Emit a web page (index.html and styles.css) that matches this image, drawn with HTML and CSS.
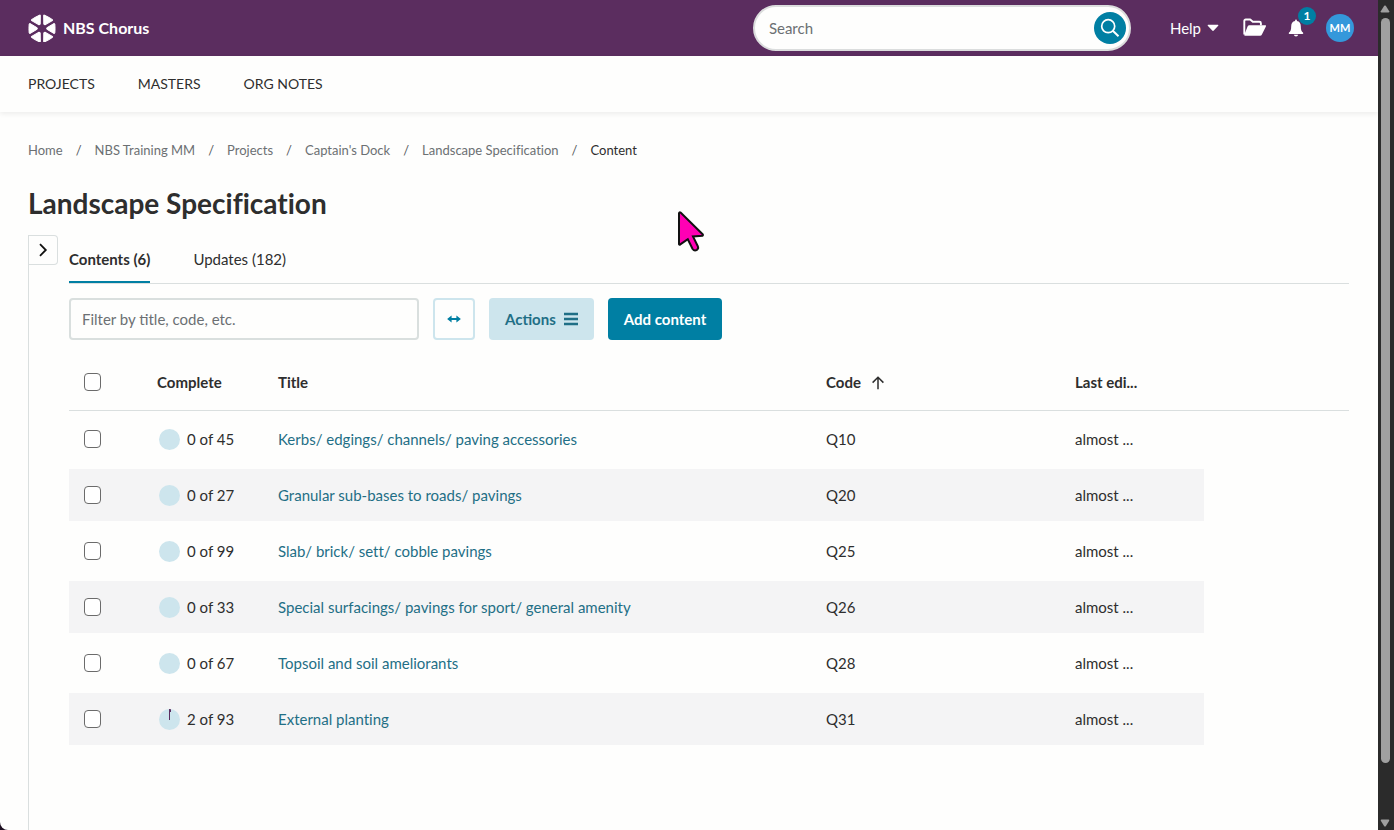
FILE: index.html
```html
<!DOCTYPE html>
<html lang="en">
<head>
    <meta charset="UTF-8">
    <meta name="viewport" content="width=device-width, initial-scale=1.0">
    <title>Landscape Specification - NBS Chorus</title>
    <link rel="stylesheet" href="styles.css">
</head>
<body>
    <div class="app">
        <header class="topbar">
            <a href="#" class="brand">
                <svg class="logo" viewBox="-14 -14.5 28 28" width="28" height="28">
                    <defs>
                        <path id="petal" d="M4.8 -.7 L12 -5 Q12.6 -5.2 12.8 -4.6 Q13.3 0 12.8 4.6 Q12.6 5.2 12 5 L4.8 .7 Z"/>
                    </defs>
                    <g fill="#fff" stroke="#fff" stroke-width="1" stroke-linejoin="round">
                        <use href="#petal"/>
                        <use href="#petal" transform="rotate(60)"/>
                        <use href="#petal" transform="rotate(120)"/>
                        <use href="#petal" transform="rotate(180)"/>
                        <use href="#petal" transform="rotate(240)"/>
                        <use href="#petal" transform="rotate(300)"/>
                    </g>
                </svg>
                <span>NBS Chorus</span>
            </a>
            <form class="search">
                <input type="text" placeholder="Search" aria-label="Search">
                <button type="button" class="search-btn" aria-label="Search">
                    <svg viewBox="0 0 20 20" width="20" height="20" fill="none" stroke="#fff" stroke-width="1.7">
                        <circle cx="8.2" cy="8.2" r="6.5"/>
                        <path d="M12.8 12.8 L18.5 18.2" stroke-width="2"/>
                    </svg>
                </button>
            </form>
            <div class="tools">
                <button type="button" class="help">Help
                    <svg viewBox="0 0 12 8" width="12" height="8"><path d="M1.2 .8h9.6q1 0 .4 .9L6.8 6.6q-.8 .8-1.6 0L.8 1.7Q.2.8 1.2.8z" fill="#fff"/></svg>
                </button>
                <button type="button" class="icon-btn folder" aria-label="Open project">
                    <svg viewBox="0 0 24 20" width="24" height="20">
                        <path d="M1.3 16.5V3Q1.3 1.5 2.8 1.5H7.2L9.8 3.8H16.4Q17.9 3.8 17.9 5.3V7.2" fill="none" stroke="#fff" stroke-width="1.9" stroke-linejoin="round"/>
                        <path d="M6.3 7.2H22.2Q23.6 7.2 22.9 8.5L18.9 16.6Q18.4 17.8 17 17.8H2.2Q.8 17.8 1.4 16.5L4.7 8.3Q5.2 7.2 6.3 7.2z" fill="#fff"/>
                    </svg>
                </button>
                <button type="button" class="icon-btn bell" aria-label="Notifications">
                    <svg viewBox="0 0 16 18" width="16" height="18" fill="#fff">
                        <path d="M7.1 1.4Q7.1.4 8 .4T8.9 1.4V2Q12.8 2.7 12.8 7.2C12.8 11 13.6 12.4 15 13.5Q15.8 14.9 14.6 15H1.4Q.2 14.9 1 13.5C2.4 12.4 3.2 11 3.2 7.2Q3.2 2.7 7.1 2z"/>
                        <path d="M5.8 15.8H10.2Q9.8 17.6 8 17.6T5.8 15.8z"/>
                    </svg>
                    <span class="badge">1</span>
                </button>
                <button type="button" class="avatar">MM</button>
            </div>
        </header>

        <nav class="main-nav">
            <a href="#">PROJECTS</a>
            <a href="#">MASTERS</a>
            <a href="#">ORG NOTES</a>
        </nav>

        <ol class="breadcrumb">
            <li><a href="#">Home</a></li>
            <li><a href="#">NBS Training MM</a></li>
            <li><a href="#">Projects</a></li>
            <li><a href="#">Captain's Dock</a></li>
            <li><a href="#">Landscape Specification</a></li>
            <li class="current">Content</li>
        </ol>

        <h1>Landscape Specification</h1>

        <main class="panel">
            <button type="button" class="toggle" aria-label="Expand side panel">
                <svg viewBox="0 0 10 14" width="10" height="14" fill="none" stroke="#111" stroke-width="1.8"><path d="M2 1.2 L7.8 7 L2 12.8"/></svg>
            </button>
            <div class="content">
                <div class="tabs">
                    <a href="#" class="tab active">Contents (6)</a>
                    <a href="#" class="tab">Updates (182)</a>
                </div>

                <div class="toolbar">
                    <input type="text" class="filter" placeholder="Filter by title, code, etc." aria-label="Filter">
                    <button type="button" class="btn outline" aria-label="Resize columns">
                        <svg viewBox="0 0 14 8" width="14" height="8"><path d="M3 4H11" stroke="#007fa3" stroke-width="2"/><path d="M4.6 .4V7.6L.1 4zM9.4 .4V7.6L13.9 4z" fill="#007fa3"/></svg>
                    </button>
                    <button type="button" class="btn light">Actions
                        <svg viewBox="0 0 14 14" width="14" height="14" stroke="#1f6f86" stroke-width="2.4"><path d="M0 2H14M0 7H14M0 12H14"/></svg>
                    </button>
                    <button type="button" class="btn primary">Add content</button>
                </div>

                <table>
                    <colgroup>
                        <col class="col-check">
                        <col class="col-complete">
                        <col>
                        <col class="col-code">
                        <col class="col-edited">
                        <col class="col-end">
                    </colgroup>
                    <thead>
                        <tr>
                            <th><input type="checkbox" aria-label="Select all"></th>
                            <th>Complete</th>
                            <th>Title</th>
                            <th>Code
                                <svg class="sort" viewBox="0 0 14 14" width="14" height="14" fill="none" stroke="#2e2e2e" stroke-width="1.5"><path d="M7 13.2V1.4M1.6 6.6L7 1.2L12.4 6.6"/></svg>
                            </th>
                            <th>Last edi...</th>
                            <th></th>
                        </tr>
                    </thead>
                    <tbody>
                        <tr>
                            <td><input type="checkbox" aria-label="Select Q10"></td>
                            <td><span class="progress"><i class="pie"></i>0 of 45</span></td>
                            <td><a href="#">Kerbs/ edgings/ channels/ paving accessories</a></td>
                            <td>Q10</td>
                            <td>almost ...</td>
                        </tr>
                        <tr>
                            <td><input type="checkbox" aria-label="Select Q20"></td>
                            <td><span class="progress"><i class="pie"></i>0 of 27</span></td>
                            <td><a href="#">Granular sub-bases to roads/ pavings</a></td>
                            <td>Q20</td>
                            <td>almost ...</td>
                        </tr>
                        <tr>
                            <td><input type="checkbox" aria-label="Select Q25"></td>
                            <td><span class="progress"><i class="pie"></i>0 of 99</span></td>
                            <td><a href="#">Slab/ brick/ sett/ cobble pavings</a></td>
                            <td>Q25</td>
                            <td>almost ...</td>
                        </tr>
                        <tr>
                            <td><input type="checkbox" aria-label="Select Q26"></td>
                            <td><span class="progress"><i class="pie"></i>0 of 33</span></td>
                            <td><a href="#">Special surfacings/ pavings for sport/ general amenity</a></td>
                            <td>Q26</td>
                            <td>almost ...</td>
                        </tr>
                        <tr>
                            <td><input type="checkbox" aria-label="Select Q28"></td>
                            <td><span class="progress"><i class="pie"></i>0 of 67</span></td>
                            <td><a href="#">Topsoil and soil ameliorants</a></td>
                            <td>Q28</td>
                            <td>almost ...</td>
                        </tr>
                        <tr>
                            <td><input type="checkbox" aria-label="Select Q31"></td>
                            <td><span class="progress"><i class="pie started"></i>2 of 93</span></td>
                            <td><a href="#">External planting</a></td>
                            <td>Q31</td>
                            <td>almost ...</td>
                        </tr>
                    </tbody>
                </table>
            </div>
        </main>
    </div>

    <div class="scrollbar">
        <svg viewBox="0 0 10 8" width="10" height="8"><path d="M4.2 .8Q5 0 5.8 .8L9.2 6.2Q9.6 7.4 8.4 7.5H1.6Q.4 7.4 .8 6.2z" fill="#a0a0a0"/></svg>
        <div class="thumb"></div>
        <svg viewBox="0 0 10 8" width="10" height="8"><path d="M4.2 7.2Q5 8 5.8 7.2L9.2 1.8Q9.6 .6 8.4 .5H1.6Q.4 .6 .8 1.8z" fill="#a0a0a0"/></svg>
    </div>

    <svg class="pointer" viewBox="0 0 28 42" width="28" height="42">
        <path d="M2 2.2V33.2Q2.3 34.2 3.3 33.4L10.8 28.2L15.6 38Q17.4 40.4 20 38.8Q21.8 37.4 20.8 35.2L16 25.4L25.4 24.8Q26.4 24.2 25.6 23.2L3.6 1.6Q2.4 .8 2 2.2z" fill="#ff00b4" stroke="#111" stroke-width="2"/>
    </svg>
</body>
</html>
```
FILE: styles.css
```css
* {
    margin: 0;
    padding: 0;
    box-sizing: border-box;
    font-family: Lato, sans-serif;
}
body {
    height: 100vh;
    display: flex;
    overflow: hidden;
    background: #1c0f20;
    color: #2e2e2e;
    font-size: 15px;
    line-height: 20px;
    font-variant-ligatures: none;
}
a {
    color: inherit;
    text-decoration: none;
}
button {
    border: none;
    background: none;
    font-size: 15px;
    line-height: 20px;
    cursor: pointer;
}
.app {
    flex: 1;
    min-width: 0;
    display: flex;
    flex-direction: column;
    background: #fefefd;
    border-bottom-left-radius: 8px;
}

/* top bar */
.topbar {
    height: 56px;
    display: flex;
    align-items: center;
    padding: 0 24px 0 28px;
    background: #5b2d5f;
    color: white;
}
.brand {
    display: flex;
    align-items: center;
    gap: 7px;
    font-size: 16px;
    font-weight: bold;
}
.search {
    width: 378px;
    height: 46px;
    display: flex;
    align-items: center;
    margin-left: auto;
    padding: 0 3px 0 14px;
    border: 2px solid #dbdddd;
    border-radius: 23px;
    background: #fefefd;
}
.search input {
    flex: 1;
    min-width: 0;
    border: none;
    outline: none;
    background: none;
    font-size: 15px;
}
input::placeholder {
    color: #6c7073;
    opacity: 1;
}
.search-btn {
    width: 32px;
    height: 32px;
    display: flex;
    align-items: center;
    justify-content: center;
    border-radius: 50%;
    background: #007fa3;
}
.tools {
    display: flex;
    align-items: center;
    margin-left: 39px;
}
.tools button {
    color: white;
}
.help {
    display: flex;
    align-items: center;
    gap: 6px;
}
.icon-btn {
    display: flex;
    position: relative;
}
.folder {
    margin-left: 24px;
}
.bell {
    margin-left: 21px;
}
.badge {
    position: absolute;
    left: 10px;
    top: -12px;
    width: 18px;
    height: 18px;
    border-radius: 50%;
    background: #007fa3;
    font-size: 12px;
    font-weight: bold;
    line-height: 18px;
}
.tools .avatar {
    width: 28px;
    height: 28px;
    margin-left: 22px;
    border-radius: 50%;
    background: #3498db;
    font-size: 11px;
    font-weight: bold;
}

/* navigation */
.main-nav {
    height: 56px;
    display: flex;
    align-items: center;
    gap: 43px;
    padding: 0 28px;
    font-size: 14px;
    box-shadow: 0 2px 5px rgba(0, 0, 0, 0.07);
}
.breadcrumb {
    display: flex;
    margin: 28px 28px 0;
    list-style: none;
    font-size: 13px;
    color: #6c7073;
}
.breadcrumb li + li::before {
    content: "/";
    margin: 0 13px;
    color: #55595c;
}
.breadcrumb .current {
    color: #2e2e2e;
}
h1 {
    margin: 27px 28px 16px;
    font-size: 28px;
    line-height: 32px;
}

/* contents panel */
.panel {
    flex: 1;
    display: flex;
    align-items: flex-start;
    gap: 11px;
    margin: 0 29px 0 28px;
    border-left: 1px solid #dadfdf;
}
.toggle {
    width: 29px;
    height: 30px;
    display: flex;
    align-items: center;
    justify-content: center;
    border: 1px solid #dadfdf;
    border-left: none;
    border-radius: 0 4px 4px 0;
}
.content {
    flex: 1;
}
.tabs {
    display: flex;
    gap: 43px;
    height: 49px;
    border-bottom: 1px solid #dadfdf;
}
.tab {
    padding: 14px 0 12px;
    border-bottom: 2px solid transparent;
}
.tab.active {
    font-weight: bold;
    border-bottom-color: #007fa3;
}
.toolbar {
    display: flex;
    gap: 14px;
    margin: 14px 0;
}
.filter {
    width: 350px;
    height: 42px;
    padding: 0 11px;
    border: 2px solid #d9dfde;
    border-radius: 4px;
    background: #fefefd;
    font-size: 15px;
}
.btn {
    height: 42px;
    display: flex;
    align-items: center;
    gap: 8px;
    padding: 0 16px;
    border-radius: 4px;
    font-weight: bold;
}
.btn.outline {
    padding: 0 12px;
    border: 2px solid #cde5ed;
}
.btn.light {
    background: #cde5ed;
    color: #1f6f86;
}
.btn.primary {
    background: #007fa3;
    color: white;
}

/* table */
table {
    width: 100%;
    table-layout: fixed;
    border-collapse: separate;
    border-spacing: 0;
}
.col-check {
    width: 88px;
}
.col-complete {
    width: 121px;
}
.col-code {
    width: 249px;
}
.col-edited {
    width: 129px;
}
.col-end {
    width: 145px;
}
th {
    height: 57px;
    border-bottom: 1px solid #dadfdf;
    text-align: left;
}
td {
    height: 56px;
    border-top: 2px solid transparent;
    border-bottom: 2px solid transparent;
    background-clip: padding-box;
}
th:first-child,
td:first-child {
    padding-left: 15px;
}
tbody tr:nth-child(even) td {
    background-color: #f4f4f5;
}
td a {
    color: #1f6f86;
}
input[type="checkbox"] {
    appearance: none;
    display: block;
    width: 17px;
    height: 18px;
    border: 1px solid #6b6b6b;
    border-radius: 4px;
    background: white;
}
.sort {
    margin-left: 6px;
    vertical-align: -2px;
}
.progress {
    display: flex;
    align-items: center;
    gap: 7px;
    padding-left: 2px;
}
.pie {
    width: 21px;
    height: 21px;
    border-radius: 50%;
    background: #cde5ed;
}
.pie.started {
    background: conic-gradient(#5b2d5f 8deg, #cde5ed 8deg);
}

/* window furniture */
.scrollbar {
    width: 16px;
    display: flex;
    flex-direction: column;
    align-items: center;
    padding: 5px 2px 3px 0;
    background: #2b2b2b;
}
.thumb {
    flex: 1;
    width: 9px;
    margin: 5px 0 56px;
    border-radius: 5px;
    background: #a0a0a0;
}
.pointer {
    position: absolute;
    left: 677px;
    top: 211px;
}
```
